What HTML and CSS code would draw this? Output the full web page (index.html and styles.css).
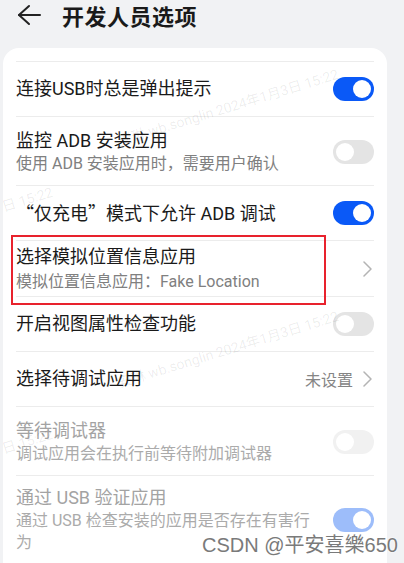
FILE: index.html
```html
<!DOCTYPE html>
<html lang="zh-CN">

<head>
	<meta charset="UTF-8">
	<title>开发人员选项</title>
	<link rel="stylesheet" href="styles.css">
</head>

<body>
	<div class="page">
		<div class="header">
			<svg class="back" width="26" height="22" viewBox="0 0 26 22">
				<polyline points="13,2 3,11 13,20" fill="none" stroke="#222" stroke-width="2" stroke-linecap="round" stroke-linejoin="round" />
				<line x1="3" y1="11" x2="24" y2="11" stroke="#222" stroke-width="2" stroke-linecap="round" />
			</svg>
			<h1 class="title">开发人员选项</h1>
		</div>

		<div class="card">
			<div class="card-top"></div>

			<div class="item item-single">
				<div class="item-text">
					<div class="item-title">连接USB时总是弹出提示</div>
				</div>
				<span class="switch on"></span>
			</div>

			<div class="item">
				<div class="item-text">
					<div class="item-title">监控 ADB 安装应用</div>
					<div class="item-sub">使用 ADB 安装应用时，需要用户确认</div>
				</div>
				<span class="switch"></span>
			</div>

			<div class="item item-single">
				<div class="item-text">
					<div class="item-title"><span class="cjk">“仅充电”</span>模式下允许 ADB 调试</div>
				</div>
				<span class="switch on"></span>
			</div>

			<div class="item item-tight">
				<div class="item-text">
					<div class="item-title">选择模拟位置信息应用</div>
					<div class="item-sub">模拟位置信息应用：Fake Location</div>
				</div>
				<svg class="arrow" width="9" height="16" viewBox="0 0 9 16">
					<polyline points="1,1 8,8 1,15" fill="none" stroke="#b4b4b4" stroke-width="1.5" stroke-linecap="round" stroke-linejoin="round" />
				</svg>
				<div class="mark"></div>
			</div>

			<div class="item item-single">
				<div class="item-text">
					<div class="item-title">开启视图属性检查功能</div>
				</div>
				<span class="switch"></span>
			</div>

			<div class="item item-single">
				<div class="item-text">
					<div class="item-title">选择待调试应用</div>
				</div>
				<span class="item-value">未设置</span>
				<svg class="arrow" width="9" height="16" viewBox="0 0 9 16">
					<polyline points="1,1 8,8 1,15" fill="none" stroke="#b4b4b4" stroke-width="1.5" stroke-linecap="round" stroke-linejoin="round" />
				</svg>
			</div>

			<div class="item disabled">
				<div class="item-text">
					<div class="item-title">等待调试器</div>
					<div class="item-sub">调试应用会在执行前等待附加调试器</div>
				</div>
				<span class="switch"></span>
			</div>

			<div class="item disabled item-last">
				<div class="item-text">
					<div class="item-title">通过 USB 验证应用</div>
					<div class="item-sub">通过 USB 检查安装的应用是否存在有害行为</div>
				</div>
				<span class="switch on"></span>
			</div>
		</div>

		<!-- 水印 -->
		<div class="wm wm-1">安琳 wb.songlin 2024年1月3日 15:22</div>
		<div class="wm wm-2">安琳 wb.songlin 2024年1月3日 15:22</div>
		<div class="wm wm-3">日 15:22</div>
		<div class="wm wm-4">日 15:22</div>
		<div class="csdn">CSDN @平安喜樂650</div>
	</div>
</body>

</html>
```

FILE: styles.css
```css
* {
	margin: 0;
	padding: 0;
	box-sizing: border-box;
}

body {
	background: #f1f2f4;
	font-family: Roboto, "Noto Sans CJK SC", sans-serif;
	color: #1a1a1a;
	overflow: hidden;
}

.page {
	position: relative;
	height: 563px;
	overflow: hidden;
	padding-right: 17px;
}

.header {
	display: flex;
	align-items: center;
	height: 30px;
	padding-left: 16px;
}

.back {
	display: block;
}

.title {
	margin-left: 20px;
	font-family: "Noto Sans CJK SC", sans-serif;
	font-size: 22px;
	font-weight: 600;
	line-height: 30px;
	letter-spacing: 0.5px;
	color: #1a1a1a;
}

.card {
	margin: 18px 0 0 3px;
	padding: 0 13px;
	background: #fff;
	border-radius: 16px 16px 0 0;
	height: 600px;
}

.card-top {
	height: 14px;
	border-bottom: 1px solid #ececec;
}

.item {
	position: relative;
	display: flex;
	align-items: center;
	padding: 12px 0 10px;
	border-bottom: 1px solid #ececec;
}

.item-single {
	height: 55px;
	padding: 0;
}

.item-tight {
	padding: 4px 0 3px;
}

.item-last {
	padding: 10px 0 9px;
}

.item-text {
	flex: 1;
	margin-right: 4px;
}

.item-last .item-text {
	margin-right: 22px;
}

.item-title {
	font-size: 18px;
	line-height: 24px;
}

.cjk {
	font-family: "Noto Sans CJK SC", sans-serif;
}

.item-sub {
	font-size: 16px;
	line-height: 22px;
	color: #808080;
}

.item-tight .item-sub {
	margin-top: 2px;
}

.item-value {
	font-size: 16px;
	color: #858585;
	margin-right: 10px;
}

.arrow {
	display: block;
	margin-right: 2px;
}

.disabled .item-title {
	color: #a3a3a3;
}

.disabled .item-sub {
	color: #ababab;
}

.switch {
	position: relative;
	flex: none;
	width: 41px;
	height: 24px;
	border-radius: 12px;
	background: #e4e4e4;
}

.switch::after {
	content: "";
	position: absolute;
	top: 3px;
	left: 3px;
	width: 18px;
	height: 18px;
	border-radius: 50%;
	background: #fff;
}

.switch.on {
	background: #0a59f7;
}

.switch.on::after {
	left: 20px;
}

.disabled .switch {
	background: #f1f1f1;
}

.disabled .switch.on {
	background: #9dbdfa;
}

.mark {
	position: absolute;
	left: -5px;
	top: -6px;
	width: 315px;
	height: 70px;
	border: 2px solid #e8222d;
}

.wm {
	position: absolute;
	font-family: Roboto, "Noto Sans CJK SC", sans-serif;
	font-size: 14px;
	color: rgba(0, 0, 0, 0.08);
	white-space: nowrap;
	transform-origin: left center;
	transform: rotate(-17deg);
}

.wm-1 {
	left: 118px;
	top: 130px;
}

.wm-2 {
	left: 118px;
	top: 372px;
}

.wm-3 {
	left: 2px;
	top: 196px;
}

.wm-4 {
	left: 2px;
	top: 438px;
}

.csdn {
	position: absolute;
	left: 202px;
	top: 531px;
	font-family: "Liberation Sans", "Noto Sans CJK SC", sans-serif;
	font-size: 20px;
	line-height: 28px;
	color: #7a7a7a;
	text-shadow: 0 0 2px #fff, 0 0 2px #fff;
}
```
